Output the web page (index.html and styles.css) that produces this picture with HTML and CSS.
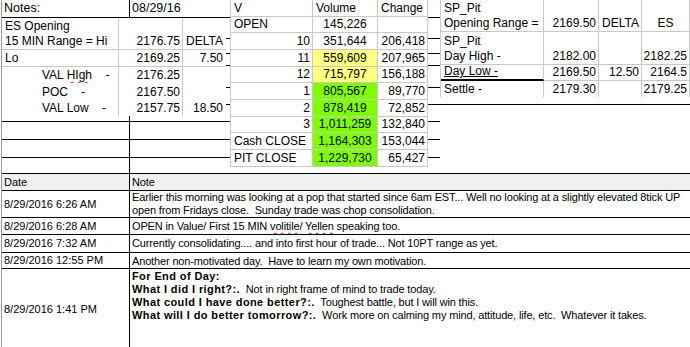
FILE: index.html
```html
<!DOCTYPE html>
<html>
<head>
<meta charset="utf-8">
<title>Notes</title>
<link rel="stylesheet" href="styles.css">
</head>
<body>
<div class="page">
  <div class="top">
    <div class="bg">
      <div class="row r1"><div class="c1 lbl">Notes:</div><div class="c2 lbl">08/29/16</div><div class="c3"></div></div>
      <div class="row r2"><div class="c1"></div><div class="c2"></div><div class="c3"></div></div>
      <div class="row r3"><div class="c1"></div><div class="c2"></div><div class="c3"></div></div>
      <div class="row r4"><div class="c1"></div><div class="c2"></div><div class="c3"></div></div>
      <div class="row r5"><div class="c1"></div><div class="c2"></div><div class="c3"></div></div>
      <div class="row r6"><div class="c1"></div><div class="c2"></div><div class="c3"></div></div>
      <div class="row r7 open"><div class="c1"></div><div class="c2"></div><div class="c3"></div></div>
      <div class="row r8 open"><div class="c1"></div><div class="c2"></div><div class="c3"></div></div>
      <div class="row r9 open"><div class="c1"></div><div class="c2"></div><div class="c3"></div></div>
      <div class="row r10"><div class="c1"></div><div class="c2"></div><div class="c3"></div></div>
    </div>

    <div class="sheet es">
      <div class="cell hb"><span>ES Opening<br>15 MIN Range = Hi</span></div>
      <div class="cell hb vr num"><span>2176.75</span></div>
      <div class="cell hb num last"><span>DELTA</span></div>
      <div class="cell hb"><span>Lo</span></div>
      <div class="cell hb vr num"><span>2169.25</span></div>
      <div class="cell hb num last"><span>7.50</span></div>
      <div class="cell ind"><span>VAL <u class="sq">HIgh</u>    -</span></div>
      <div class="cell vr num"><span>2176.25</span></div>
      <div class="cell num last"><span></span></div>
      <div class="cell ind"><span>POC    -</span></div>
      <div class="cell vr num"><span>2167.50</span></div>
      <div class="cell num last"><span></span></div>
      <div class="cell ind"><span>VAL Low    -</span></div>
      <div class="cell vr num"><span>2157.75</span></div>
      <div class="cell num last"><span>18.50</span></div>
    </div>

    <div class="sheet vol">
      <div class="cell"><span>V</span></div><div class="cell"><span>Volume</span></div><div class="cell"><span>Change</span></div>
      <div class="cell"><span>OPEN</span></div><div class="cell ctr"><span>145,226</span></div><div class="cell num"><span></span></div>
      <div class="cell num"><span>10</span></div><div class="cell ctr"><span>351,644</span></div><div class="cell num"><span>206,418</span></div>
      <div class="cell num"><span>11</span></div><div class="cell ctr yel"><span>559,609</span></div><div class="cell num"><span>207,965</span></div>
      <div class="cell num"><span>12</span></div><div class="cell ctr yel"><span>715,797</span></div><div class="cell num"><span>156,188</span></div>
      <div class="cell num"><span>1</span></div><div class="cell ctr grn"><span>805,567</span></div><div class="cell num"><span>89,770</span></div>
      <div class="cell num"><span>2</span></div><div class="cell ctr grn"><span>878,419</span></div><div class="cell num"><span>72,852</span></div>
      <div class="cell num"><span>3</span></div><div class="cell ctr grn"><span>1,011,259</span></div><div class="cell num"><span>132,840</span></div>
      <div class="cell"><span>Cash CLOSE</span></div><div class="cell ctr grn"><span>1,164,303</span></div><div class="cell num"><span>153,044</span></div>
      <div class="cell"><span>PIT CLOSE</span></div><div class="cell ctr grn"><span>1,229,730</span></div><div class="cell num"><span>65,427</span></div>
    </div>

    <div class="sheet sp">
      <div class="cell hb"><span>SP_Pit<br>Opening Range =</span></div>
      <div class="cell hb num"><span>2169.50</span></div>
      <div class="cell hb num"><span>DELTA</span></div>
      <div class="cell hb ctr"><span>ES</span></div>
      <div class="cell hb"><span>SP_Pit<br>Day High -</span></div>
      <div class="cell hb num"><span>2182.00</span></div>
      <div class="cell hb num"><span></span></div>
      <div class="cell hb num"><span>2182.25</span></div>
      <div class="cell thick"><span class="ul">Day Low -</span></div>
      <div class="cell hb num"><span>2169.50</span></div>
      <div class="cell hb num"><span>12.50</span></div>
      <div class="cell hb num"><span>2164.5</span></div>
      <div class="cell"><span>Settle -</span></div>
      <div class="cell num"><span>2179.30</span></div>
      <div class="cell num"><span></span></div>
      <div class="cell num"><span>2179.25</span></div>
    </div>
  </div>

  <div class="notes">
    <div class="nrow head"><div class="nd">Date</div><div class="nn">Note</div></div>
    <div class="nrow n1"><div class="nd">8/29/2016 6:26 AM</div><div class="nn">Earlier this morning was looking at a pop that started since 6am EST... Well no looking at a slightly elevated 8tick UP
open from Fridays close.  Sunday trade was chop consolidation.</div></div>
    <div class="nrow n2"><div class="nd">8/29/2016 6:28 AM</div><div class="nn">OPEN in Value/ First 15 MIN <u class="sq">volitile</u>/ <u class="sq">Yellen</u> speaking too.</div></div>
    <div class="nrow n3"><div class="nd">8/29/2016 7:32 AM</div><div class="nn">Currently consolidating.... and into first hour of trade... Not 10PT range as yet.</div></div>
    <div class="nrow n4"><div class="nd">8/29/2016 12:55 PM</div><div class="nn">Another non-motivated day.  Have to learn my own motivation.</div></div>
    <div class="nrow n5"><div class="nd">8/29/2016 1:41 PM</div><div class="nn"><b>For End of Day:</b>
<b>What I did I right?:.</b>  Not in right frame of mind to trade today.
<b>What could I have done better?:.</b>  Toughest battle, but I will win this.
<b>What will I do better tomorrow?:.</b>  Work more on calming my mind, attitude, life, etc.  Whatever it takes.</div></div>
  </div>
</div>
</body>
</html>
```

FILE: styles.css
```css
html, body {
  margin: 0;
  padding: 0;
  background: #fff;
  overflow: hidden;
}

body {
  width: 690px;
  height: 347px;
}

.page {
  margin-left: 1px;
  border-left: 1px solid #9a9a9a;
  height: 347px;
  overflow: hidden;
  color: #000;
  font-family: "Liberation Sans", Arial, sans-serif;
}

/* ---------- top area: background table + pasted sheets ---------- */
.top {
  position: relative;
  height: 174px;
}

.bg {
  display: flex;
  flex-direction: column;
}

.row {
  display: flex;
  box-sizing: border-box;
}

.row > div {
  box-sizing: border-box;
  border-bottom: 1px solid #000;
}

.c1 {
  width: 128px;
  border-right: 1px solid #000;
}

.c2 {
  width: 310px;
}

.c3 {
  flex: 1;
}

.row.open .c3 {
  border-bottom-color: transparent;
}

.lbl {
  font-size: 12.5px;
  line-height: 17px;
  padding-left: 2px;
}

.r1 { height: 18px; }
.r2 { height: 21px; }
.r3 { height: 15px; }
.r4 { height: 12px; }
.r5 { height: 22px; }
.r6 { height: 17px; }
.r7 { height: 17px; }
.r8 { height: 18px; }
.r9 { height: 18px; }
.r10 { height: 16px; }

.sheet {
  position: absolute;
  display: grid;
  background: #fff;
  font-size: 12px;
  line-height: 15px;
}

.cell {
  box-sizing: border-box;
  display: flex;
  align-items: flex-end;
  padding: 0 2px 0 3px;
  white-space: pre;
  overflow: hidden;
}

.cell.num {
  justify-content: flex-end;
}

.cell.ctr {
  justify-content: center;
  padding-left: 0;
  padding-right: 0;
}

/* ES sheet */
.es {
  left: 0;
  top: 18px;
  grid-template-columns: 117px 64px 43px;
  grid-template-rows: 32px 17px 16px 17px 16px;
}

.es .cell:nth-child(3n+1) {
  border-right: 1px solid #c8c8c8;
}

.es .cell.vr {
  border-right: 1px solid #c8c8c8;
}

.es .cell.last {
  padding-right: 3px;
}

.es .hb {
  border-bottom: 1px solid #c8c8c8;
}

.es .ind {
  padding-left: 40px;
}

/* Volume sheet */
.vol {
  left: 228px;
  top: 0;
  border-left: 1px solid #c8c8c8;
  grid-template-columns: 82px 65px 50px;
  grid-template-rows: 17px 16px 17px 17px 16px 17px 17px 16px 17px 17px;
}

.vol .cell {
  border-right: 1px solid #c8c8c8;
  border-bottom: 1px solid #c8c8c8;
}

.yel {
  background: #ffff80;
}

.grn {
  background: #80ff00;
}

/* SP sheet */
.sp {
  left: 438px;
  top: 0;
  border-left: 1px solid #c8c8c8;
  grid-template-columns: 103px 55px 43px 48px;
  grid-template-rows: 32px 33px 16px 16px;
}

.sp .cell {
  border-right: 1px solid #c8c8c8;
}

.sp .hb {
  border-bottom: 1px solid #c8c8c8;
}

.sp .thick {
  border-bottom: 2px solid #000;
}

.ul {
  text-decoration: underline;
}

.sq {
  text-decoration: underline wavy #e00000;
  text-decoration-thickness: 1px;
  text-underline-offset: 2px;
}

/* ---------- notes table ---------- */
.notes {
  display: flex;
  flex-direction: column;
  font-size: 11px;
  line-height: 13px;
}

.nrow {
  display: flex;
  box-sizing: border-box;
  border-bottom: 1px solid #000;
}

.nd {
  box-sizing: border-box;
  width: 128px;
  border-right: 1px solid #000;
  padding-left: 2px;
  display: flex;
  align-items: center;
  white-space: pre;
}

.nn {
  flex: 1;
  padding: 2px 0 0 2px;
  white-space: pre;
  overflow: hidden;
  letter-spacing: -0.15px;
}

.nn b {
  letter-spacing: 0.4px;
}

.head {
  height: 17px;
  background: #f0f0f0;
}

.n1 { height: 27px; }
.n1 .nn { padding-top: 0; }
.n2 { height: 17px; }
.n3 { height: 18px; }
.n4 { height: 16px; }
.n5 { height: 82px; }
.n5 .nn { padding-top: 1px; }
```
